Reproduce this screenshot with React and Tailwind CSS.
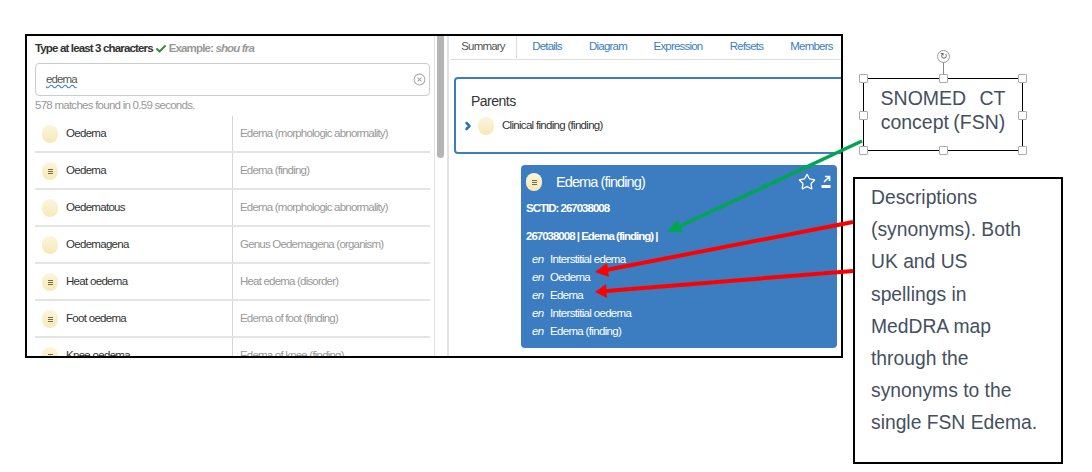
import React from 'react';
import { Check, CircleX, ChevronRight, Star } from 'lucide-react';

const results = [
  { term: 'Oedema', fsn: 'Edema (morphologic abnormality)', menu: false },
  { term: 'Oedema', fsn: 'Edema (finding)', menu: true },
  { term: 'Oedematous', fsn: 'Edema (morphologic abnormality)', menu: false },
  { term: 'Oedemagena', fsn: 'Genus Oedemagena (organism)', menu: false },
  { term: 'Heat oedema', fsn: 'Heat edema (disorder)', menu: true },
  { term: 'Foot oedema', fsn: 'Edema of foot (finding)', menu: true },
  { term: 'Knee oedema', fsn: 'Edema of knee (finding)', menu: true },
];

const tabs = ['Details', 'Diagram', 'Expression', 'Refsets', 'Members'];
const tabWidths = ['w-[60px]', 'w-[62px]', 'w-[78px]', 'w-[59px]', 'w-[71px]'];

const descriptions = [
  'Interstitial edema',
  'Oedema',
  'Edema',
  'Interstitial oedema',
  'Edema (finding)',
];

const handleSpots = [
  'left-[-5px] top-[-5px]',
  'left-[75px] top-[-5px]',
  'right-[-5px] top-[-5px]',
  'left-[-5px] top-[32px]',
  'right-[-5px] top-[32px]',
  'left-[-5px] bottom-[-5px]',
  'left-[75px] bottom-[-5px]',
  'right-[-5px] bottom-[-5px]',
];

const ConceptDot = ({ menu }) => (
  <span className="flex h-[18px] w-[16px] shrink-0 flex-col items-center justify-center gap-[1px] rounded-full bg-gradient-to-b from-[#fbf5dc] to-[#f6e9b7]">
    {menu && (
      <>
        <span className="h-[1px] w-[5px] bg-[#7d6a3c]" />
        <span className="h-[1px] w-[5px] bg-[#7d6a3c]" />
        <span className="h-[1px] w-[5px] bg-[#7d6a3c]" />
      </>
    )}
  </span>
);

const ResultRow = ({ term, fsn, menu }) => (
  <div className="flex h-[37px] shrink-0 border-b-2 border-[#e4e4e4]">
    <div className="flex w-[198px] items-center border-r border-[#d6d6d6] pl-[7px] pt-[1px]">
      <ConceptDot menu={menu} />
      <span className="ml-[8px] text-[11.5px] tracking-[-0.7px] text-[#333]">{term}</span>
    </div>
    <div className="flex items-center pl-[7px] text-[11.5px] tracking-[-0.8px] text-[#999]">{fsn}</div>
  </div>
);

const SearchPanel = () => (
  <div className="flex h-full w-[408px] shrink-0 flex-col overflow-hidden border-r border-[#e3e3e3] pl-[8px] pr-[4px]">
    <div className="flex h-[27px] shrink-0 items-center pb-[1px] text-[11.5px] font-bold tracking-[-0.85px]">
      <span className="text-[#333]">Type at least 3 characters</span>
      <Check className="mx-[2px] h-[12px] w-[12px] text-[#3c8a3c]" strokeWidth={4} />
      <span className="text-[#999]">
        Example: <em>shou fra</em>
      </span>
    </div>
    <div className="flex h-[33px] shrink-0 items-center justify-between rounded border border-[#ccc] pl-[10px] pr-[3px]">
      <span className="text-[11.5px] tracking-[-0.9px] text-[#555] underline decoration-[#3b7de0] decoration-wavy">edema</span>
      <CircleX className="h-[13px] w-[13px] text-[#aaa]" />
    </div>
    <div className="flex h-[20px] shrink-0 items-center pb-[1px] text-[11.5px] tracking-[-0.74px] text-[#999]">578 matches found in 0.59 seconds.</div>
    {results.map((row, index) => (
      <ResultRow key={index} {...row} />
    ))}
  </div>
);

const ConceptCard = () => (
  <div className="ml-[71px] mt-[11px] flex h-[183px] w-[316px] shrink-0 flex-col rounded bg-[#3b7dc0] pl-[5px] pr-[6px] text-white">
    <div className="flex h-[34px] shrink-0 items-center">
      <ConceptDot menu />
      <span className="ml-[14px] pt-[1px] text-[14.5px] tracking-[-0.9px]">Edema (finding)</span>
      <Star className="ml-auto h-[18px] w-[18px]" strokeWidth={1.8} />
      <svg className="ml-[5px] h-[14px] w-[10px]" viewBox="0 0 10 14" fill="none">
        <path d="M3 7 L8 2 M4 1.5 H8.5 V6" stroke="white" strokeWidth="1.6" />
        <path d="M0.5 10 H9.5 V13 H0.5 Z" fill="white" />
      </svg>
    </div>
    <div className="mt-[1px] flex h-[18px] items-center text-[11.5px] font-bold tracking-[-1px]">SCTID: 267038008</div>
    <div className="mt-[10px] flex h-[18px] items-center text-[11.5px] font-bold tracking-[-1px]">267038008 | Edema (finding) |</div>
    <div className="mt-[5px] flex flex-col">
      {descriptions.map((text) => (
        <div key={text} className="flex h-[18px] items-center text-[11.5px] tracking-[-0.67px]">
          <em className="ml-[6px] w-[18px]">en</em>
          <span>{text}</span>
        </div>
      ))}
    </div>
  </div>
);

const DetailPanel = () => (
  <div className="flex h-full min-w-0 flex-1 flex-col overflow-hidden border-l-2 border-[#e3e3e3] pl-[1px]">
    <div className="flex h-[24px] shrink-0 border-b border-[#ddd] pb-[1px] text-[11.5px] tracking-[-0.8px]">
      <span className="flex w-[67px] shrink-0 items-center justify-center border-r border-[#ddd] bg-white text-[#555]">Summary</span>
      {tabs.map((tab, index) => (
        <span key={tab} className={`flex shrink-0 items-center justify-center text-[#3b7dc0] ${tabWidths[index]}`}>
          {tab}
        </span>
      ))}
    </div>
    <div className="ml-[4px] mt-[17px] h-[77px] w-[440px] shrink-0 rounded-[4px] border-2 border-[#3b7dc0] pl-[15px] pt-[12px]">
      <div className="text-[14px] leading-[20px] tracking-[-0.5px] text-[#333]">Parents</div>
      <div className="ml-[-9px] mt-[6px] flex items-center">
        <ChevronRight className="h-[12px] w-[12px] text-[#2f74b8]" strokeWidth={5} />
        <span className="ml-[4px]"><ConceptDot /></span>
        <span className="ml-[8px] text-[11.5px] tracking-[-0.7px] text-[#333]">Clinical finding (finding)</span>
      </div>
    </div>
    <ConceptCard />
  </div>
);

const Arrows = () => (
  <svg className="pointer-events-none absolute left-0 top-0" width="1092" height="472" viewBox="0 0 1092 472">
    <line x1="862" y1="141" x2="676" y2="228" stroke="#00a650" strokeWidth="3.5" />
    <polygon points="667,232 677,220 683,232" fill="#00a650" />
    <line x1="853" y1="222" x2="606" y2="270" stroke="#ff0000" strokeWidth="4" />
    <polygon points="595,272 607,263 609,277" fill="#ff0000" />
    <line x1="853" y1="271" x2="606" y2="291" stroke="#ff0000" strokeWidth="4" />
    <polygon points="595,292 606,284 607,298" fill="#ff0000" />
  </svg>
);

const FsnCallout = () => (
  <div className="absolute left-[863px] top-[78px] h-[73px] w-[160px] border-[1.5px] border-black bg-white">
    <div className="absolute left-[79px] top-[-17px] h-[17px] w-[1px] bg-[#888]" />
    <div className="absolute left-[73px] top-[-29px] flex h-[13px] w-[13px] items-center justify-center rounded-full border border-[#999] bg-white text-[9px] leading-none text-[#555]">↻</div>
    {handleSpots.map((spot) => (
      <span key={spot} className={`absolute h-[9px] w-[9px] rounded-[1px] border border-[#aaa] bg-white ${spot}`} />
    ))}
    <div className="whitespace-pre pt-[7px] text-center text-[19.5px] leading-[24px] text-[#44505f] [word-spacing:-1px]">
      {'SNOMED   CT\nconcept (FSN)'}
    </div>
  </div>
);

const SynonymCallout = () => (
  <div className="absolute left-[853px] top-[177px] h-[287px] w-[210px] whitespace-pre border-2 border-black bg-white pl-[16px] pt-[3px] text-[19.3px] leading-[32.2px] text-[#44505f]">
    {'Descriptions\n(synonyms). Both\nUK and US\nspellings in\nMedDRA map\nthrough the\nsynonyms to the\nsingle FSN Edema.'}
  </div>
);

export default function App() {
  return (
    <div className="relative h-[472px] w-[1092px] overflow-hidden bg-white font-['Liberation_Sans',Arial,sans-serif]">
      <div className="ml-[25px] mt-[34px] flex h-[324px] w-[818px] overflow-hidden border-2 border-black">
        <SearchPanel />
        <div className="w-[12px] shrink-0 pl-[2px] pr-[3px]">
          <div className="h-[122px] w-[7px] rounded-b bg-[#b5b5b5]" />
        </div>
        <DetailPanel />
      </div>
      <FsnCallout />
      <SynonymCallout />
      <Arrows />
    </div>
  );
}
